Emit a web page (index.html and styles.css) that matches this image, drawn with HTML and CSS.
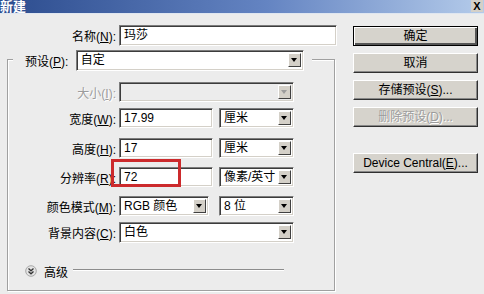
FILE: index.html
```html
<!DOCTYPE html>
<html>
<head>
	<meta charset="utf-8">
	<title>新建</title>
	<link rel="stylesheet" href="styles.css">
</head>
<body>
	<div class="dialog">
		<div class="titlebar">
			<span class="title">新建</span>
			<span class="close">X</span>
		</div>
		<div class="main">
			<div class="left">
				<div class="row name-row">
					<span class="label">名称(<u>N</u>):</span>
					<div class="field w-name">玛莎</div>
				</div>
				<div class="group">
					<div class="legend">
						<span class="legend-label">预设(<u>P</u>):</span>
						<div class="field select w-preset">自定<span class="drop"></span></div>
					</div>
					<div class="row size-row">
						<span class="label off">大小(<u>I</u>):</span>
						<div class="field select off w-long"><span class="drop"></span></div>
					</div>
					<div class="row width-row">
						<span class="label">宽度(<u>W</u>):</span>
						<div class="field w-num">17.99</div>
						<div class="field select w-unit">厘米<span class="drop"></span></div>
					</div>
					<div class="row height-row">
						<span class="label">高度(<u>H</u>):</span>
						<div class="field w-num">17</div>
						<div class="field select w-unit">厘米<span class="drop"></span></div>
					</div>
					<div class="row res-row">
						<span class="label">分辨率(<u>R</u>):</span>
						<div class="field w-num">72</div>
						<div class="field select w-unit">像素/英寸<span class="drop"></span></div>
						<div class="mark"></div>
					</div>
					<div class="row mode-row">
						<span class="label">颜色模式(<u>M</u>):</span>
						<div class="field select w-mode">RGB 颜色<span class="drop"></span></div>
						<div class="field select w-bits">8 位<span class="drop"></span></div>
					</div>
					<div class="row bg-row">
						<span class="label">背景内容(<u>C</u>):</span>
						<div class="field select w-long">白色<span class="drop"></span></div>
					</div>
					<div class="advanced">
						<svg class="chev" width="12" height="12" viewBox="0 0 12 12">
							<circle cx="6" cy="6" r="5.3" fill="#e4e4e4" stroke="#a8a8a8"/>
							<polyline points="3.5,3.5 6,5.8 8.5,3.5" fill="none" stroke="#333" stroke-width="1.3"/>
							<polyline points="3.5,6.5 6,8.8 8.5,6.5" fill="none" stroke="#333" stroke-width="1.3"/>
						</svg>
						<span class="adv-text">高级</span>
						<span class="adv-line"></span>
					</div>
				</div>
			</div>
			<div class="right">
				<div class="btn default">确定</div>
				<div class="btn">取消</div>
				<div class="btn">存储预设(<u>S</u>)...</div>
				<div class="btn off">删除预设(<u>D</u>)...</div>
				<div class="btn device">Device Central(<u>E</u>)...</div>
			</div>
		</div>
	</div>
</body>
</html>
```

FILE: styles.css
```css
* { margin: 0; padding: 0; box-sizing: border-box; }
body {
	width: 484px;
	height: 294px;
	overflow: hidden;
	background: #ececec;
	font-family: "Liberation Sans", "Noto Sans CJK SC", sans-serif;
	font-size: 12px;
	color: #000;
}
u { text-decoration: underline; }

.titlebar {
	height: 14px;
	display: flex;
	align-items: center;
	justify-content: space-between;
	background: linear-gradient(to right, #2c4c8e, #6484c2 55%, #b4cbea);
	border-bottom: 1px solid #dfe6f0;
}
.title { color: #fff; font-weight: bold; font-size: 13px; margin-left: 0; line-height: 13px; }
.close {
	width: 12px; height: 12px; margin-top: -2px; margin-right: 1px;
	background: #d4d0c8; color: #000; font-weight: bold; font-size: 11px;
	line-height: 12px; text-align: center;
}

.main { display: flex; }
.left { width: 353px; }
.right { width: 125px; padding-top: 12px; display: flex; flex-direction: column; }

.row { display: flex; align-items: center; height: 20px; position: relative; }
.label { width: 108px; margin-right: 3px; text-align: right; white-space: nowrap; }
.name-row { margin-top: 11px; height: 21px; }
.name-row .label { width: 116px; }
.label.off, .btn.off { color: #9c9c9c; text-shadow: 1px 1px 0 #fff; }

.field {
	height: 20px;
	background: #fff;
	border: 1px solid;
	border-color: #7c7c7c #fff #fff #7c7c7c;
	box-shadow: inset 1px 1px 0 #3c3c3c, inset -1px -1px 0 #d4d0c8;
	padding-left: 4px;
	line-height: 18px;
	white-space: nowrap;
	position: relative;
}
.name-row .field { height: 21px; }
.field.off { background: #ececec; }
.select { padding-right: 16px; }
.drop {
	position: absolute; right: 2px; top: 2px;
	width: 13px; height: 14px;
	background: #d4d0c8;
	border: 1px solid; border-color: #fff #404040 #404040 #fff;
}
.drop::after {
	content: ""; position: absolute; left: 2px; top: 4px;
	border-left: 3.5px solid transparent; border-right: 3.5px solid transparent;
	border-top: 4px solid #000;
}
.off .drop::after { border-top-color: #9c9c9c; }

.w-name { width: 218px; }
.w-preset { width: 229px; height: 21px; }
.w-long { width: 175px; }
.w-num { width: 94px; margin-right: 6px; }
.w-unit { width: 75px; }
.w-mode { width: 90px; margin-right: 10px; }
.w-bits { width: 75px; }

.group {
	margin: 13px 0 0 7px;
	width: 328px;
	height: 232px;
	border: 1px solid #a0a0a0;
	box-shadow: inset 1px 1px 0 #fff, 1px 1px 0 #fff;
}
.legend {
	display: flex; align-items: center;
	margin: -10px 0 0 5px;
	width: 299px; height: 21px;
	padding: 0 8px 0 12px;
	background: #ececec;
}
.legend-label { width: 51px; white-space: nowrap; }

.size-row { margin-top: 11px; }
.width-row { margin-top: 6px; }
.height-row { margin-top: 10px; }
.res-row { margin-top: 9px; }
.mode-row { margin-top: 9px; }
.bg-row { margin-top: 6px; height: 21px; }
.bg-row .field { height: 21px; }

.mark {
	position: absolute; left: 103px; top: -8px;
	width: 70px; height: 28px;
	border: 3px solid #cc2a2c;
}

.advanced { display: flex; align-items: center; margin-top: 21px; height: 14px; }
.chev { margin-left: 17px; margin-right: 7px; }
.adv-text { margin-right: 5px; }
.adv-line { width: 211px; height: 1px; background: #8c8c8c; margin-top: -3px; box-shadow: 0 1px 0 #fff; }

.btn {
	height: 20px;
	margin-bottom: 7px;
	background: #d6d3cc;
	border: 1px solid; border-color: #fff #303030 #303030 #fff;
	box-shadow: inset -1px -1px 0 #888;
	text-align: center;
	line-height: 18px;
	white-space: nowrap;
}
.btn.default { border-color: #000; box-shadow: inset 1px 1px 0 #fff, inset -2px -2px 0 #555; }
.btn.device { margin-top: 19px; }
```
